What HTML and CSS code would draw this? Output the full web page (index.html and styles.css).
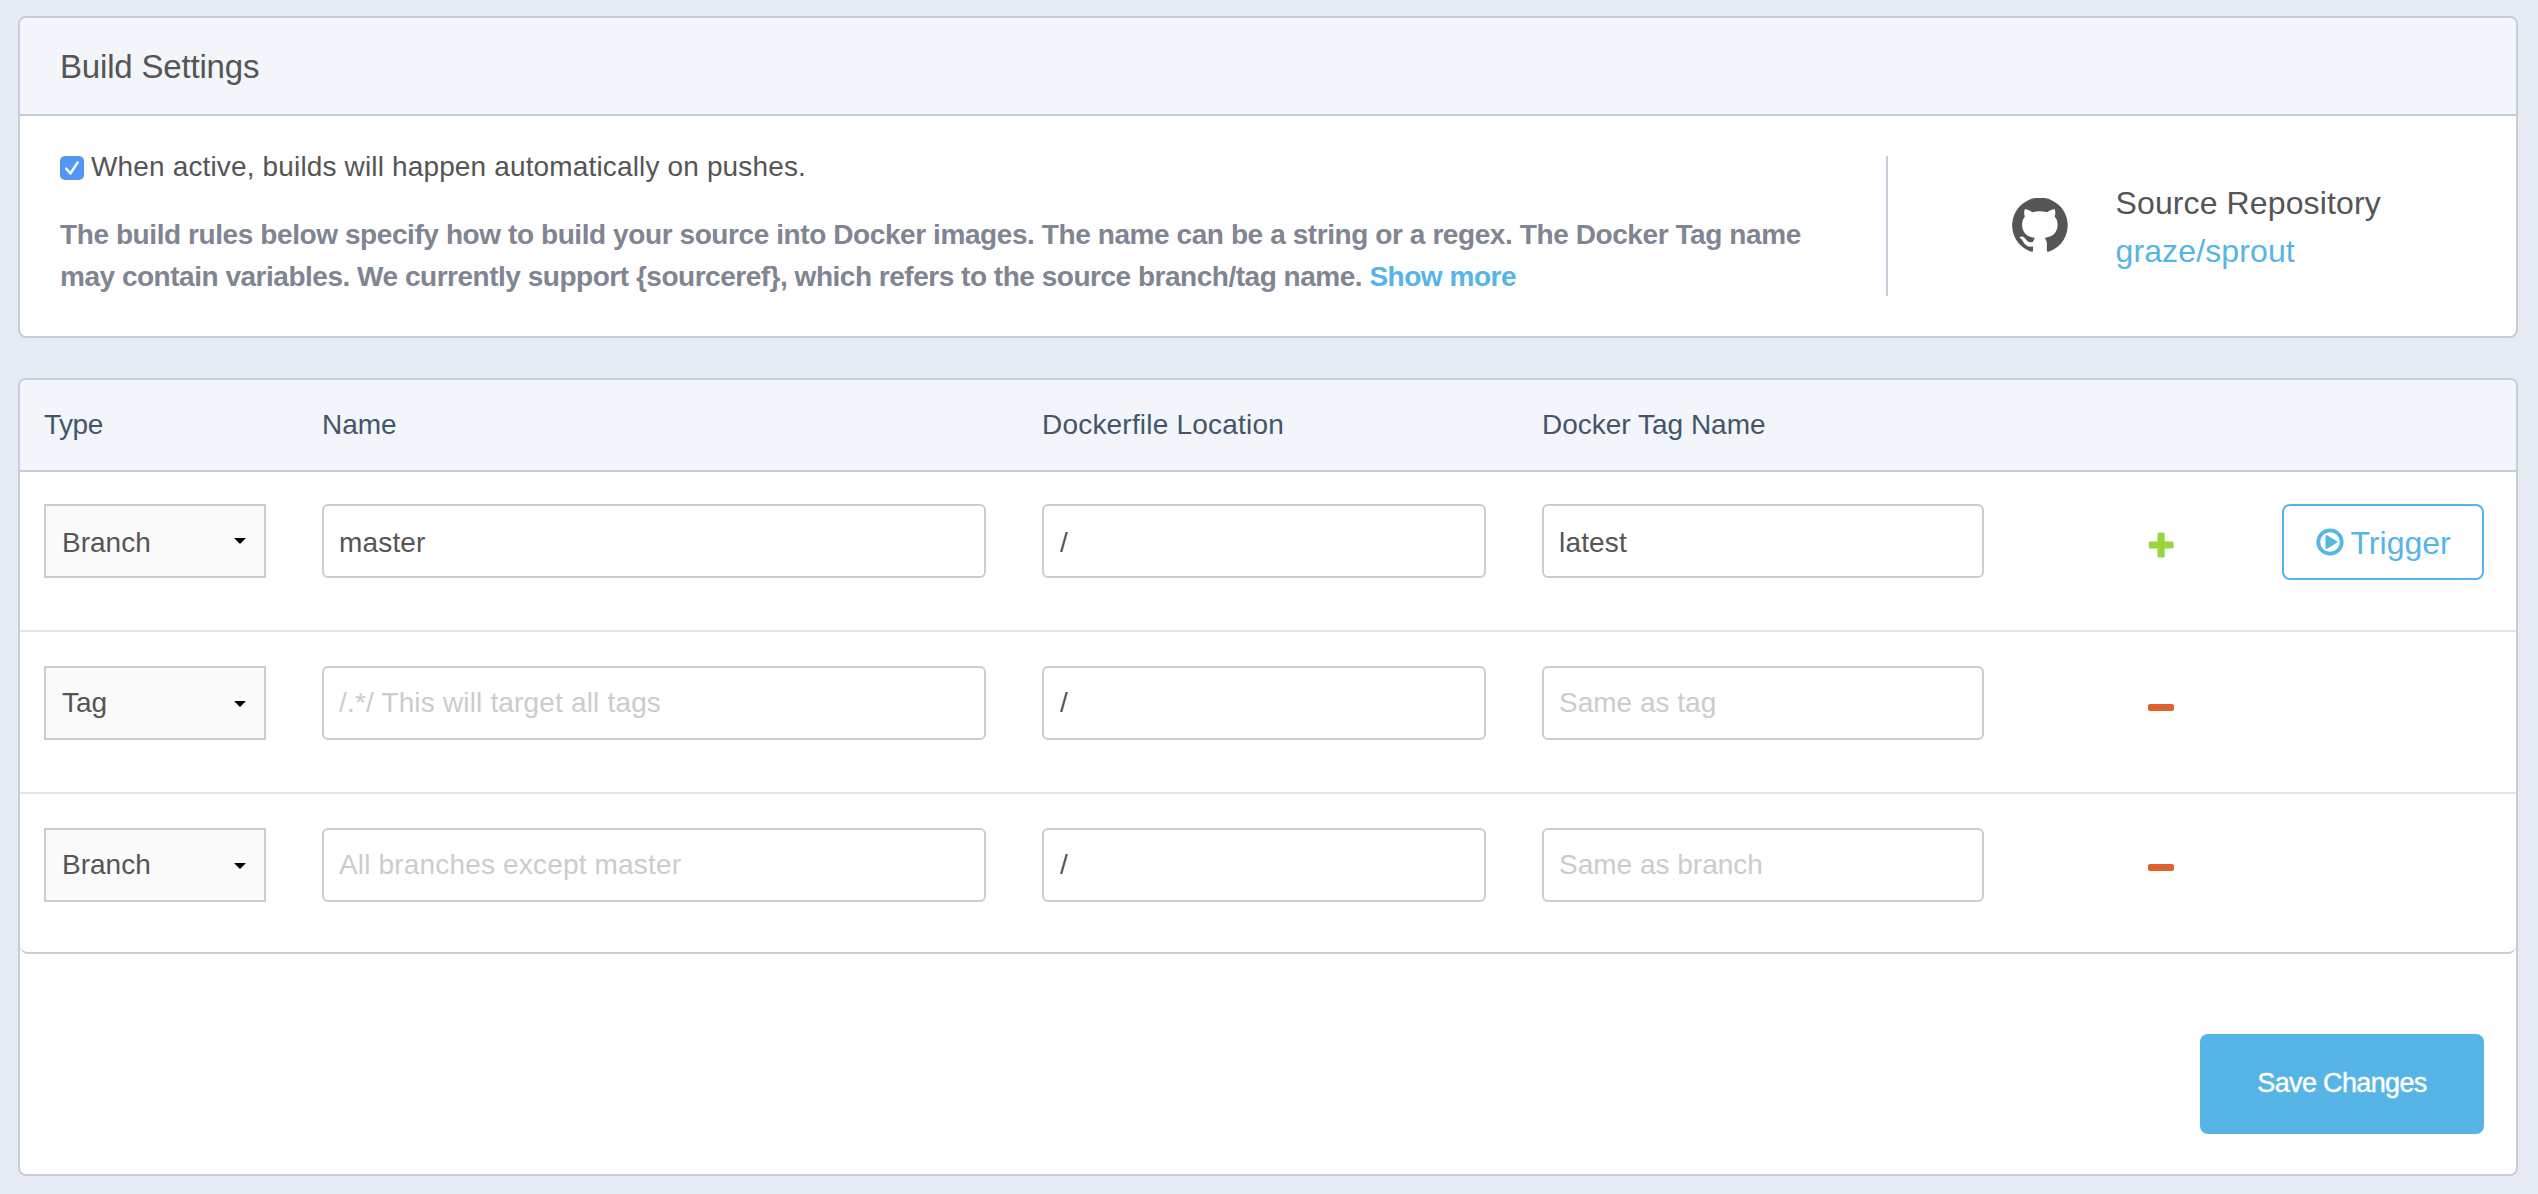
FILE: index.html
```html
<!DOCTYPE html>
<html lang="en">
<head>
<meta charset="utf-8">
<title>Build Settings</title>
<link rel="stylesheet" href="styles.css">
</head>
<body>
<section class="card settings">
  <header class="card-header"><h1 class="title">Build Settings</h1></header>
  <div class="settings-body">
    <div class="settings-main">
      <label class="active-toggle">
        <span class="checkbox"><svg viewBox="0 0 24 24" width="24" height="24"><path d="M6.200 12.600l4.200 4.900L17.700 6.400" fill="none" stroke="#fff" stroke-width="2.400" stroke-linecap="round" stroke-linejoin="round"/></svg></span>
        <span class="toggle-text">When active, builds will happen automatically on pushes.</span>
      </label>
      <p class="help">The build rules below specify how to build your source into Docker images. The name can be a string or a regex. The Docker Tag name<br><span class="help-more">may contain variables. We currently support {sourceref}, which refers to the source branch/tag name. <a class="link">Show more</a></span></p>
    </div>
    <aside class="repo">
      <svg class="octocat" viewBox="0 0 16 16" width="55.500" height="55.500"><path fill="#555" d="M10.500 15.500A8 8 0 1 0 5.600 15.500Q6.050 15.600 6.050 15.200V14C4.600 14.200 3.900 13.700 3.400 12.900C3 12.100 2.800 11.800 2.300 11.500Q2.100 11.200 2.700 11.100C3.500 11.100 3.800 11.700 4.200 12.200C4.600 12.800 5.300 12.900 6.100 12.600Q6.200 11.900 6.600 11.500C4.300 11.200 2.900 10.100 2.900 7.500Q2.900 6.200 3.700 5.300Q3.300 4.300 3.700 3.250Q4.500 3.150 5.900 4.100Q8 3.600 10.100 4.100Q11.500 3.150 12.300 3.250Q12.700 4.300 12.300 5.300Q13.150 6.200 13.150 7.500C13.150 10.100 11.700 11.200 9.400 11.500Q10.050 12.100 10.050 13V15.200Q10.050 15.600 10.500 15.500Z"/></svg>
      <div class="repo-text"><div>Source Repository</div><a class="link">graze/sprout</a></div>
    </aside>
  </div>
</section>

<section class="card rules">
  <div class="grid rules-head">
    <div class="head-type">Type</div><div>Name</div><div class="head-location">Dockerfile Location</div><div>Docker Tag Name</div>
  </div>
  <div class="grid rule first">
    <div class="select"><span>Branch</span><svg width="12" height="6"><path d="M0 0h12L6 6z"/></svg></div>
    <input class="field name" value="master">
    <input class="field location" value="/">
    <input class="field name" value="latest">
    <svg class="icon plus" width="26" height="26" viewBox="0 0 26 26"><path fill="#98d63f" d="M11 .6h4.200a1.500 1.500 0 0 1 1.500 1.500v7.400h7.400a1.500 1.500 0 0 1 1.500 1.500v4a1.500 1.500 0 0 1-1.500 1.500h-7.400v7.600a1.500 1.500 0 0 1-1.500 1.500H11a1.500 1.500 0 0 1-1.500-1.500v-7.600H2.300A1.500 1.500 0 0 1 .8 15v-4a1.500 1.500 0 0 1 1.500-1.500h7.200V2.100A1.500 1.500 0 0 1 11 .6z"/></svg>
    <button class="trigger"><svg width="28" height="28" viewBox="0 0 28 28"><circle cx="14" cy="14" r="11.700" fill="none" stroke="#56b4e6" stroke-width="3.800"/><path fill="#56b4e6" d="M9.500 8.200a1 1 0 0 1 1.500-.9l10 5.900a.9.9 0 0 1 0 1.600L11 20.700a1 1 0 0 1-1.500-.9z"/></svg><span>Trigger</span></button>
  </div>
  <div class="grid rule second">
    <div class="select"><span>Tag</span><svg width="12" height="6"><path d="M0 0h12L6 6z"/></svg></div>
    <input class="field name" placeholder="/.*/ This will target all tags">
    <input class="field location" value="/">
    <input class="field" placeholder="Same as tag">
    <span class="icon minus"></span>
  </div>
  <div class="grid rule third">
    <div class="select"><span>Branch</span><svg width="12" height="6"><path d="M0 0h12L6 6z"/></svg></div>
    <input class="field name" placeholder="All branches except master">
    <input class="field location" value="/">
    <input class="field" placeholder="Same as branch">
    <span class="icon minus"></span>
  </div>
  <footer class="actions"><button class="save">Save Changes</button></footer>
</section>
</body>
</html>
```
FILE: styles.css
```css
* { box-sizing: border-box; }
body {
  margin: 0;
  padding: 16px 20px 18px 18px;
  min-height: 1194px;
  display: flex;
  flex-direction: column;
  gap: 40px;
  background: #e7ebf4;
  color: #555;
  font: 28px/42px "Liberation Sans", Arial, sans-serif;
}
.card {
  background: #fff;
  border: 2px solid #c4cdda;
  border-radius: 8px;
  overflow: hidden;
}
.link { color: #56b4e6; }
.settings { height: 322px; }
.card-header {
  height: 98px;
  padding: 26px 40px 0;
  background: #f2f5fa;
  border-bottom: 2px solid #c4cdda;
}
.title { margin: 0; font-size: 33px; font-weight: 400; line-height: 46px; letter-spacing: -.18px; }
.settings-body { display: flex; padding: 40px; }
.settings-main { flex: none; width: 1828px; height: 140px; border-right: 2px solid #c4cdda; }
.active-toggle { display: flex; align-items: flex-start; gap: 7px; height: 24px; }
.checkbox {
  width: 24px;
  height: 24px;
  border-radius: 5px;
  background: #5098f4;
}
.checkbox svg { display: block; }
.toggle-text { margin-top: -10px; letter-spacing: .15px; white-space: nowrap; }
.help { margin: 34px 0 0; color: #7f8592; font-weight: 700; letter-spacing: -.414px; white-space: nowrap; }
.help-more { letter-spacing: -.48px; }
.repo { display: flex; padding-left: 124px; }
.octocat { margin-top: 42px; }
.repo-text { margin: 23px 0 0 48px; font-size: 32px; line-height: 48px; letter-spacing: .12px; }

.rules { height: 798px; }
.grid {
  display: grid;
  grid-template-columns: 222px 664px 444px 442px 186px 202px;
  column-gap: 56px;
  align-items: start;
  padding-left: 24px;
}
.rules-head {
  height: 92px;
  padding-top: 24px;
  background: #f2f5fa;
  border-bottom: 2px solid #c4cdda;
  color: #445569;
}
.head-type { letter-spacing: -.5px; }
.head-location { letter-spacing: .2px; }
.rule { border-bottom: 2px solid #e5e5e5; }
.first { height: 160px; padding-top: 32px; }
.second { height: 162px; padding-top: 34px; }
.third { height: 160px; padding-top: 34px; border-bottom-color: #c4cdda; border-radius: 0 0 8px 8px; }
.field, .select {
  width: 100%;
  height: 74px;
  margin: 0;
  padding: 0 15px;
  border: 2px solid #ccc;
  color: #555;
  font: inherit;
}
.field { border-radius: 6px; background: #fff; outline: 0; }
.field::placeholder { color: #ccc; opacity: 1; }
.location { padding-left: 16px; }
.name { letter-spacing: .17px; }
.select {
  display: flex;
  align-items: center;
  justify-content: space-between;
  padding: 0 18px 0 16px;
  background: #fafafa;
}
.select svg { margin-top: 1px; }
.first .field { padding-top: 3px; }
.first .select span { padding-top: 3px; }
.first .select svg { margin-top: 0; }
.icon { margin-left: 108px; }
.plus { margin-top: 28px; }
.minus { width: 26px; height: 7px; margin-top: 38px; border-radius: 2px; background: #dd622e; }
.third .minus { margin-top: 36px; }
.trigger {
  display: flex;
  align-items: center;
  gap: 7px;
  width: 202px;
  height: 76px;
  padding: 2px 0 0 31.5px;
  border: 2px solid #56b4e6;
  border-radius: 8px;
  background: #fff;
  color: #56b4e6;
  font: 32px/40px "Liberation Sans", Arial, sans-serif;
}
.trigger svg { margin-top: -2px; }
.actions { display: flex; justify-content: flex-end; padding: 80px 32px 0; }
.save {
  width: 284px;
  height: 100px;
  padding: 0 0 2px;
  border: 0;
  border-radius: 8px;
  background: #56b4e6;
  color: #fff;
  font: 27px/40px "Liberation Sans", Arial, sans-serif;
  letter-spacing: -.65px;
  -webkit-text-stroke: .4px #fff;
}
```
